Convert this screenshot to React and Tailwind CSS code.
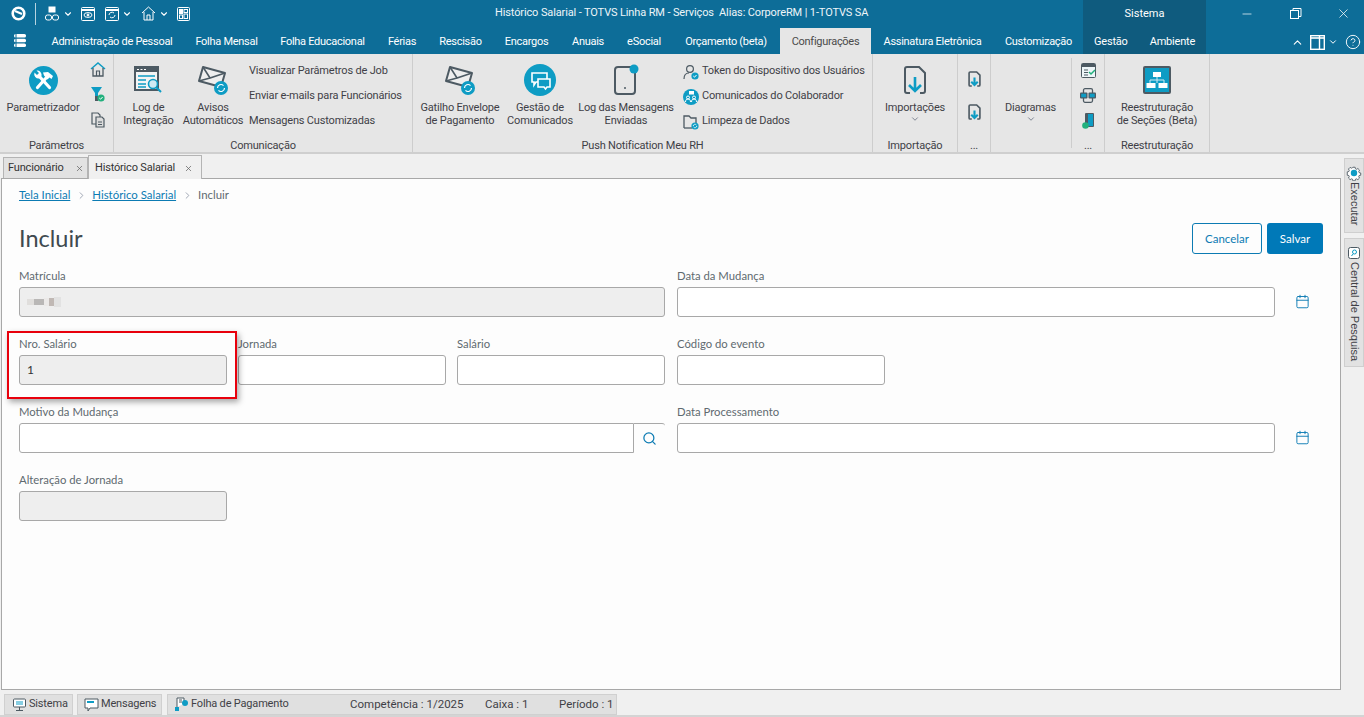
import React from 'react';
import { Calendar, ChevronDown, ChevronRight, ChevronUp, CircleHelp, Minus, Search, X } from 'lucide-react';

const ribbonFont = "font-['Roboto',sans-serif]";
const formFont = "font-['Lato',sans-serif]";

const Teal = '#0e9cc4';
const Dark = '#4d5a63';

const Gear = () => (
    <svg width="16" height="16" viewBox="0 0 16 16">
        <path d="M6.6.8h2.8l.4 2 1.3.6 1.8-1 2 2-1 1.8.5 1.3 2 .5v2.8l-2 .4-.5 1.3 1 1.8-2 2-1.8-1-1.3.5-.4 2H6.6l-.4-2-1.3-.5-1.8 1-2-2 1-1.8-.5-1.3-2-.4V6.600l2-.5.5-1.300-1-1.800 2-2 1.800 1 1.300-.6z" fill="#fff" stroke={Dark} strokeWidth="1.1" transform="translate(1.6 1.6) scale(.8)" />
        <circle cx="8" cy="8" r="3.2" fill={Teal} />
    </svg>
);

const Envelope = ({ size = 34 }) => (
    <svg width={size} height={size} viewBox="0 0 34 34" fill="none">
        <path d="M7 4l22 6-4 14-22-6z" fill="#eee" stroke={Dark} strokeWidth="2" strokeLinejoin="round" />
        <path d="M7 4l7 11 15-5M3 18l11-3" stroke={Dark} strokeWidth="1.6" />
        <circle cx="25" cy="25" r="7" fill={Teal} />
        <path d="M21.5 25a3.5 3.5 0 0 1 6-2.4M28.5 25a3.5 3.5 0 0 1-6 2.4" stroke="#fff" strokeWidth="1.2" />
    </svg>
);

const LogIcon = () => (
    <svg width="30" height="28" viewBox="0 0 30 28" fill="none">
        <rect x="1" y="1" width="23" height="23" fill="#f4f4f4" stroke={Dark} strokeWidth="2" />
        <rect x="1" y="1" width="23" height="5" fill={Dark} />
        <path d="M3 3.500h2M6.500 3.500h2M10 3.500h2" stroke="#fff" />
        <path d="M4 10h17M4 14h8M4 18h8M4 21h8" stroke={Teal} strokeWidth="1.6" />
        <circle cx="19" cy="18" r="4.5" fill="#cfeaf3" stroke={Teal} strokeWidth="1.6" />
        <path d="M22 21l5 5" stroke={Teal} strokeWidth="2" />
    </svg>
);

const SmallHome = () => (
    <svg width="16" height="15" viewBox="0 0 16 15" fill="none">
        <path d="M1 7l7-6 7 6" stroke={Teal} strokeWidth="1.5" />
        <path d="M3 6v8h10V6" stroke={Dark} strokeWidth="1.3" />
        <path d="M6.5 14V9h3v5" stroke={Dark} strokeWidth="1.2" />
    </svg>
);

const FilterCheck = () => (
    <svg width="14" height="15" viewBox="0 0 14 15">
        <path d="M0 0h11L7 6v8H4V6z" fill={Teal} />
        <path d="M4 9h3v5H4z" fill={Dark} />
        <circle cx="10" cy="11" r="3.6" fill="#22b07d" />
        <path d="M8.3 11l1.3 1.2 2-2.2" stroke="#fff" strokeWidth="1" fill="none" />
    </svg>
);

const Copies = () => (
    <svg width="14" height="16" viewBox="0 0 14 16" fill="none" stroke={Dark} strokeWidth="1.2">
        <path d="M1 1h6l2 2v9H1z" fill="#e6e6e6" />
        <path d="M5 5h6l2 2v8H5z" fill="#dcdcdc" />
        <path d="M7 10h4M7 12.5h4" />
    </svg>
);

// crossed hammer and wrench on the teal disc
const Wrench = () => (
    <svg width="29" height="29" viewBox="0 0 29 29" fill="none">
        <circle cx="14.500" cy="14.500" r="14.500" fill={Teal} />
        <path d="M8.500 21.500l8.500-9.500" stroke="#fff" strokeWidth="3.200" strokeLinecap="round" />
        <path d="M14 6.500l5-.5 5 4-1.500 3-2-1.500-2 2-3.500-4z" fill="#fff" />
        <path d="M10 10l10.500 11.500" stroke="#fff" strokeWidth="3.200" strokeLinecap="round" />
        <path d="M5.500 6.500l2.500 2.500 2-2-2.500-2.500a4.500 4.500 0 0 1 5 5.500l-2 2.500a4.500 4.500 0 0 1-5-6z" fill="#fff" />
    </svg>
);

const ChatCircle = () => (
    <svg width="32" height="32" viewBox="0 0 32 32" fill="none">
        <circle cx="16" cy="16" r="16" fill={Teal} />
        <path d="M8 9h15v9H12l-2 3v-3H8z" stroke="#fff" strokeWidth="1.6" />
        <path d="M14 15h12v8h-3l-1.5 2-1.5-2h-6z" fill={Teal} stroke="#fff" strokeWidth="1.6" />
    </svg>
);

const Phone = () => (
    <svg width="26" height="32" viewBox="0 0 26 32" fill="none">
        <rect x="2" y="3" width="20" height="27" rx="3" stroke={Dark} strokeWidth="2" />
        <circle cx="12" cy="24" r="1" fill={Dark} />
        <circle cx="21" cy="5" r="4.5" fill={Teal} />
    </svg>
);

const UserCheck = () => (
    <svg width="16" height="16" viewBox="0 0 16 16" fill="none">
        <circle cx="7" cy="5" r="3.4" stroke={Dark} strokeWidth="1.2" />
        <path d="M1 15c0-4 2-6 5-6" stroke={Dark} strokeWidth="1.2" />
        <circle cx="12" cy="12" r="3.6" fill={Teal} />
        <path d="M10.3 12l1.2 1.2 2-2.2" stroke="#fff" strokeWidth="1" />
    </svg>
);

const PeopleCircle = () => (
    <svg width="16" height="16" viewBox="0 0 16 16" fill="none">
        <circle cx="8" cy="8" r="8" fill={Teal} />
        <rect x="6" y="2" width="5" height="3.5" fill="#fff" />
        <circle cx="5" cy="8.5" r="1.5" stroke="#fff" />
        <circle cx="11" cy="8.5" r="1.5" stroke="#fff" />
        <path d="M2.5 13c0-2 1-3 2.500-3s2.500 1 2.500 3M8.500 13c0-2 1-3 2.500-3s2.500 1 2.500 3" stroke="#fff" />
    </svg>
);

const FolderSync = () => (
    <svg width="16" height="16" viewBox="0 0 16 16" fill="none">
        <path d="M1 14V2h5l2 2h5v6" stroke={Dark} strokeWidth="1.3" />
        <path d="M1 14h8" stroke={Dark} strokeWidth="1.3" />
        <circle cx="12" cy="12" r="3.6" fill={Teal} />
        <path d="M10.2 12a1.8 1.8 0 0 1 3.2-1M13.800 12a1.800 1.800 0 0 1-3.200 1" stroke="#fff" strokeWidth=".8" />
    </svg>
);

const FileDown = ({ w = 24, h = 28, sw = 2 }) => (
    <svg width={w} height={h} viewBox="0 0 24 28" fill="none">
        <path d="M7 27H4a2 2 0 0 1-2-2V3a2 2 0 0 1 2-2h12l6 6v18a2 2 0 0 1-2 2h-3" stroke={Dark} strokeWidth={sw} />
        <path d="M12 11v14M6 19l6 6 6-6" stroke={Teal} strokeWidth={sw * 1.3} />
    </svg>
);

const FormCheck = () => (
    <svg width="15" height="15" viewBox="0 0 15 15" fill="none">
        <rect x=".5" y=".5" width="14" height="14" rx="1" fill="#eef6f9" stroke={Dark} />
        <rect x="1" y="1" width="13" height="3" fill={Dark} />
        <path d="M3 7h4M3 9.500h4M3 12h4" stroke={Dark} />
        <path d="M8 9l2 2 4-4" stroke="#22b07d" strokeWidth="1.5" />
    </svg>
);

const LinkedBoxes = () => (
    <svg width="16" height="15" viewBox="0 0 16 15" fill="none">
        <rect x="3.500" y=".7" width="9" height="13.600" rx="1.500" stroke={Dark} strokeWidth="1.300" />
        <rect x="0" y="4.500" width="7.500" height="6" rx="1" fill={Dark} />
        <rect x="8.500" y="4.500" width="7.500" height="6" rx="1" fill={Dark} />
        <rect x="1.200" y="5.700" width="5" height="3.600" fill={Teal} />
        <rect x="9.700" y="5.700" width="5" height="3.600" fill={Teal} />
    </svg>
);

const DoorCheck = () => (
    <svg width="13" height="16" viewBox="0 0 13 16">
        <rect x="3" y="0" width="9" height="14" rx="1" fill={Dark} />
        <rect x="6" y="1" width="5" height="12" fill={Teal} />
        <circle cx="3.5" cy="12.5" r="3.3" fill="#22b07d" />
    </svg>
);

const Hierarchy = () => (
    <svg width="28" height="28" viewBox="0 0 28 28" fill="none">
        <rect x="0" y="0" width="28" height="28" rx="2" fill={Dark} />
        <rect x="2" y="2" width="24" height="24" fill={Teal} />
        <rect x="10" y="6" width="8" height="5" fill="#fff" />
        <path d="M14 11v3M7 17v-3h14v3M14 14v3" stroke="#cfeaf3" />
        <rect x="3.5" y="17" width="9" height="5" fill="#fff" />
        <rect x="15.5" y="17" width="9" height="5" fill="#fff" />
    </svg>
);

const LargeButton = ({ icon, lines, width, chevron }) => (
    <div className="flex flex-col items-center" style={{ width }}>
        <div className="h-[38px] w-full flex items-center justify-center">{icon}</div>
        <div className="mt-[2px] text-center leading-[13px] whitespace-nowrap">
            {lines.map((l) => <div key={l}>{l}</div>)}
        </div>
        {chevron && <ChevronDown className="w-[10px] h-[10px] text-gray-500" />}
    </div>
);

const SmallRow = ({ icon, children }) => (
    <div className="h-[25px] flex items-center gap-[3px] whitespace-nowrap">
        {icon}
        <span>{children}</span>
    </div>
);

const RibbonGroup = ({ width, label, children, className = 'border-r' }) => (
    <div className={`h-full flex flex-col border-[#cdcdcd] shrink-0 ${className}`} style={{ width }}>
        <div className="h-[85px] flex">{children}</div>
        <div className="flex-1 text-center leading-[13px]">{label}</div>
    </div>
);

const Field = ({ label, width, readOnly, value, children, className = '' }) => (
    <div className={`shrink-0 ${className}`} style={{ width }}>
        <div className="h-[19px] text-[11.3px] leading-[15px] text-[#5f6a70]">{label}</div>
        <div className="flex">
            <div className={`flex-1 h-[30px] border border-[#a8a8a8] rounded-[3px] flex items-center pl-[7px] text-[12px] text-[#333] ${readOnly ? 'bg-[#eeeeee]' : 'bg-white'} ${children ? 'rounded-r-none' : ''}`}>
                {value}
            </div>
            {children}
        </div>
    </div>
);

const BlurredValue = () => (
    <div className="flex items-center">
        <div className="w-[7px] h-[6px] bg-[#e0dedc]" />
        <div className="w-[10px] h-[6px] bg-[#b9b7b6]" />
        <div className="w-[5px] h-[8px] bg-[#ebe9e8]" />
        <div className="w-[5px] h-[8px] bg-[#c0b8b4]" />
        <div className="w-[7px] h-[10px] bg-[#e2e2e2]" />
    </div>
);

const menuTabs = [
    ['Administração de Pessoal', 144],
    ['Folha Mensal', 85],
    ['Folha Educacional', 107],
    ['Férias', 52],
    ['Rescisão', 65],
    ['Encargos', 67],
    ['Anuais', 56],
    ['eSocial', 56],
    ['Orçamento (beta)', 108],
];

export default function App() {
    return (
        <div className={`w-[1364px] h-[717px] overflow-hidden flex flex-col bg-[#f0f0f0] text-[11px] text-[#333] ${ribbonFont}`}>
            {/* title bar and menu */}
            <header className="h-[54px] flex bg-[#0d6d98] text-white shrink-0">
                <div className="w-[1083px] flex flex-col">
                    <div className="h-[27px] flex items-center">
                        <div className="flex items-center ml-[11px] w-[484px] gap-[6px]">
                            <svg width="15" height="15" viewBox="0 0 15 15" fill="none">
                                <circle cx="7.5" cy="7.5" r="5.8" stroke="#fff" strokeWidth="2.6" />
                                <path d="M4 5l7 3" stroke="#fff" strokeWidth="2" />
                            </svg>
                            <div className="w-px h-[22px] bg-white/70 mx-[3px]" />
                            <svg width="15" height="15" viewBox="0 0 15 15" fill="none" stroke="#fff">
                                <rect x="4" y="1" width="6" height="5" fill="#fff" />
                                <rect x=".5" y="9" width="6" height="5" rx="2" />
                                <rect x="7.5" y="9" width="6" height="5" rx="2" />
                            </svg>
                            <ChevronDown className="w-[10px] h-[10px] -ml-[3px]" strokeWidth={2.6} />
                            <svg width="14" height="14" viewBox="0 0 14 14" fill="none" stroke="#fff" className="ml-[2px]">
                                <rect x=".5" y=".5" width="13" height="13" rx="1" />
                                <path d="M1 3h12" strokeWidth="2" />
                                <ellipse cx="7" cy="8" rx="4" ry="2.4" />
                                <circle cx="7" cy="8" r="1" fill="#fff" />
                            </svg>
                            <svg width="14" height="14" viewBox="0 0 14 14" fill="none" stroke="#fff" className="ml-[4px]">
                                <rect x=".5" y=".5" width="13" height="13" rx="1" />
                                <path d="M1 3h12" strokeWidth="2" />
                                <path d="M4 8a3 3 0 0 1 5-2M10 8a3 3 0 0 1-5 2" />
                            </svg>
                            <ChevronDown className="w-[10px] h-[10px] -ml-[3px]" strokeWidth={2.6} />
                            <svg width="15" height="15" viewBox="0 0 15 15" fill="none" stroke="#fff" className="ml-[3px]">
                                <path d="M1 7l6.5-6L14 7" />
                                <path d="M3 6v8h9V6M6 14V9h3v5" />
                            </svg>
                            <ChevronDown className="w-[10px] h-[10px] -ml-[3px]" strokeWidth={2.6} />
                            <svg width="13" height="14" viewBox="0 0 13 14" fill="none" stroke="#fff" className="ml-[2px]">
                                <rect x=".5" y=".5" width="12" height="13" rx="1" />
                                <rect x="2.5" y="2.5" width="3" height="4" fill="#fff" />
                                <rect x="7" y="2.5" width="3.5" height="3" />
                                <rect x="2.5" y="8" width="3" height="3.5" />
                                <rect x="7" y="7" width="3.5" height="4.5" />
                            </svg>
                        </div>
                        <div className="whitespace-nowrap text-[#eef5f8] tracking-[-0.125px]">Histórico Salarial - TOTVS Linha RM - Serviços&nbsp; Alias: CorporeRM | 1-TOTVS SA</div>
                    </div>
                    <div className="h-[27px] flex items-center tracking-[-0.28px]">
                        <svg width="14" height="15" viewBox="0 0 14 15" fill="#fff" className="ml-[13px] mr-[13px] shrink-0">
                            <rect x="1" y="1" width="12" height="3.6" rx="1.6" />
                            <rect x="1" y="5.7" width="12" height="3.6" rx="1.6" />
                            <rect x="1" y="10.4" width="12" height="3.6" rx="1.6" />
                            <path d="M3 1v13" stroke="#0d6d98" strokeWidth="1" />
                        </svg>
                        {menuTabs.map(([t, w]) => (
                            <span key={t} className="whitespace-nowrap text-center pt-[3px] shrink-0" style={{ width: w }}>{t}</span>
                        ))}
                        <span className="h-full w-[91px] bg-[#e6e6e6] text-[#4a4a4a] flex items-center justify-center shrink-0 pt-[3px] mt-px">Configurações</span>
                        <span className="whitespace-nowrap text-center pt-[3px] w-[123px] shrink-0">Assinatura Eletrônica</span>
                        <span className="whitespace-nowrap text-center pt-[3px] w-[89px] shrink-0">Customização</span>
                    </div>
                </div>
                <div className="w-[123px] bg-[#0f5b7e] flex flex-col">
                    <div className="h-[27px] flex items-center justify-center pt-[2px]">Sistema</div>
                    <div className="h-[27px] flex items-center pl-[11px] gap-[22px] pt-[3px] tracking-[-0.2px]">
                        <span>Gestão</span>
                        <span>Ambiente</span>
                    </div>
                </div>
                <div className="flex-1 flex flex-col">
                    <div className="h-[27px] flex items-center pl-[34px]">
                        <Minus className="w-[14px] h-[14px]" strokeWidth={1.2} />
                        <svg width="12" height="12" viewBox="0 0 12 12" fill="none" stroke="#fff" className="ml-[36px]">
                            <rect x=".5" y="2.5" width="8" height="8" />
                            <path d="M3 2.5V.5h8v8H9" />
                        </svg>
                        <X className="w-[15px] h-[15px] ml-[34px]" strokeWidth={1.2} />
                    </div>
                    <div className="h-[27px] flex items-center pl-[85px] pt-[3px]">
                        <ChevronUp className="w-[13px] h-[13px] mr-[6px]" strokeWidth={2} />
                        <svg width="15" height="15" viewBox="0 0 15 15" fill="none" stroke="#fff" strokeWidth="1.4">
                            <rect x=".7" y=".7" width="13.6" height="13.6" />
                            <path d="M1 3h13" strokeWidth="1.6" />
                            <path d="M9.5 1v13" />
                        </svg>
                        <ChevronDown className="w-[10px] h-[10px] ml-[3px] mr-[7px]" strokeWidth={2.4} />
                        <CircleHelp className="w-[16px] h-[16px]" strokeWidth={1.4} />
                    </div>
                </div>
            </header>

            {/* ribbon */}
            <div className="h-[100px] bg-[#e6e6e6] border-b-2 border-[#cfcfcf] flex shrink-0 text-[#3f3f46] tracking-[-0.18px]">
                <RibbonGroup width={114} label="Parâmetros">
                    <div className="pt-[7px] pl-[1px] flex">
                        <LargeButton icon={<Wrench />} lines={['Parametrizador']} width={84} />
                        <div className="ml-[3px] pt-[1px] flex flex-col gap-[10px] items-center w-[20px]">
                            <SmallHome />
                            <FilterCheck />
                            <Copies />
                        </div>
                    </div>
                </RibbonGroup>
                <RibbonGroup width={299} label="Comunicação">
                    <div className="pt-[7px] flex">
                        <LargeButton icon={<LogIcon />} lines={['Log de', 'Integração']} width={69} />
                        <LargeButton icon={<Envelope />} lines={['Avisos', 'Automáticos']} width={60} />
                        <div className="ml-[6px] -mt-[2px]">
                            <SmallRow>Visualizar Parâmetros de Job</SmallRow>
                            <SmallRow>Enviar e-mails para Funcionários</SmallRow>
                            <SmallRow>Mensagens Customizadas</SmallRow>
                        </div>
                    </div>
                </RibbonGroup>
                <RibbonGroup width={460} label="Push Notification Meu RH">
                    <div className="pt-[7px] flex">
                        <LargeButton icon={<Envelope />} lines={['Gatilho Envelope', 'de Pagamento']} width={94} />
                        <LargeButton icon={<ChatCircle />} lines={['Gestão de', 'Comunicados']} width={66} />
                        <LargeButton icon={<Phone />} lines={['Log das Mensagens', 'Enviadas']} width={106} />
                        <div className="ml-[4px] -mt-[2px]">
                            <SmallRow icon={<UserCheck />}>Token do Dispositivo dos Usuários</SmallRow>
                            <SmallRow icon={<PeopleCircle />}>Comunicados do Colaborador</SmallRow>
                            <SmallRow icon={<FolderSync />}>Limpeza de Dados</SmallRow>
                        </div>
                    </div>
                </RibbonGroup>
                <RibbonGroup width={85} label="Importação">
                    <div className="pt-[7px]">
                        <LargeButton icon={<FileDown />} lines={['Importações']} width={84} chevron />
                    </div>
                </RibbonGroup>
                <RibbonGroup width={33} label="...">
                    <div className="w-full pt-[17px] flex flex-col items-center gap-[17px]">
                        <FileDown w={13} h={16} sw={3} />
                        <FileDown w={13} h={16} sw={3} />
                    </div>
                </RibbonGroup>
                <RibbonGroup width={80} label="" className="border-r-0">
                    <div className="pt-[7px]">
                        <LargeButton icon={null} lines={['Diagramas']} width={79} chevron />
                    </div>
                </RibbonGroup>
                <div className="w-px h-[90px] mt-[4px] bg-[#cdcdcd] shrink-0" />
                <RibbonGroup width={33} label="...">
                    <div className="w-full pt-[9px] flex flex-col items-center gap-[10px]">
                        <FormCheck />
                        <LinkedBoxes />
                        <DoorCheck />
                    </div>
                </RibbonGroup>
                <RibbonGroup width={105} label="Reestruturação">
                    <div className="pt-[7px]">
                        <LargeButton icon={<Hierarchy />} lines={['Reestruturação', 'de Seções (Beta)']} width={104} />
                    </div>
                </RibbonGroup>
            </div>

            {/* body */}
            <div className="flex-1 flex min-h-0">
                <div className="w-[1340px] ml-[1px] flex flex-col shrink-0">
                    <div className="h-[24px] flex items-end pl-[2px] shrink-0 tracking-[-0.18px]">
                        <div className="h-[21px] w-[85px] bg-[#e2e2e2] border border-b-0 border-[#b4b4b4] flex items-center justify-between pl-[4px] pr-[3px] pt-px whitespace-nowrap">
                            Funcionário <X className="w-[9px] h-[9px] text-[#666]" />
                        </div>
                        <div className="h-[24px] w-[114px] bg-[#f0f0f0] border border-b-0 border-[#b4b4b4] flex items-center justify-between pl-[6px] pr-[8px] pt-px whitespace-nowrap -mb-px relative z-10">
                            Histórico Salarial <X className="w-[9px] h-[9px] text-[#666]" />
                        </div>
                    </div>
                    <main className={`flex-1 bg-[#fdfdfd] border border-[#a8a8a8] px-[17px] ${formFont}`}>
                        <nav className="h-[31px] flex items-center text-[11.4px] pt-[1px]">
                            <span className="text-[#0c7bb3] underline">Tela Inicial</span>
                            <ChevronRight className="w-[11px] h-[11px] text-gray-400 mx-[5.5px]" />
                            <span className="text-[#0c7bb3] underline">Histórico Salarial</span>
                            <ChevronRight className="w-[11px] h-[11px] text-gray-400 mx-[5.5px]" />
                            <span className="text-[#5f6a70]">Incluir</span>
                        </nav>
                        <div className="h-[58px] flex items-center justify-between">
                            <h1 className="text-[23.5px] font-normal text-[#3f4a50]">Incluir</h1>
                            <div className="flex gap-[5px] text-[11.5px] -mt-px">
                                <div className="w-[70px] h-[31px] border border-[#0c7bb3] rounded-[3px] text-[#0c7bb3] flex items-center justify-center">Cancelar</div>
                                <div className="w-[56px] h-[31px] bg-[#0079b8] rounded-[3px] text-white flex items-center justify-center">Salvar</div>
                            </div>
                        </div>
                        <div className="flex flex-col gap-[19px]">
                            <div className="flex gap-[12px]">
                                <Field label="Matrícula" width={646} readOnly value={<BlurredValue />} />
                                <Field label="Data da Mudança" width={598} />
                                <Calendar className="w-[15px] h-[15px] text-[#0c7bb3] ml-[8px] mt-[26px]" strokeWidth={1.5} />
                            </div>
                            <div className="flex gap-[11px]">
                                <div className="relative">
                                    <Field label="Nro. Salário" width={208} readOnly value="1" />
                                    <div className="absolute -left-[12px] -top-[5px] w-[230px] h-[68px] border-[2px] border-[#e8000c] shadow-[2px_3px_6px_rgba(0,0,0,0.35)]" />
                                </div>
                                <Field label="Jornada" width={208} />
                                <Field label="Salário" width={208} />
                                <Field label="Código do evento" width={208} className="ml-px" />
                            </div>
                            <div className="flex gap-[12px]">
                                <Field label="Motivo da Mudança" width={646}>
                                    <div className="w-[31px] h-[30px] border-t border-[#a8a8a8] rounded-tr-[3px] flex items-center justify-center">
                                        <Search className="w-[15px] h-[15px] text-[#0c7bb3]" />
                                    </div>
                                </Field>
                                <Field label="Data Processamento" width={598} />
                                <Calendar className="w-[15px] h-[15px] text-[#0c7bb3] ml-[8px] mt-[26px]" strokeWidth={1.5} />
                            </div>
                            <Field label="Alteração de Jornada" width={208} readOnly />
                        </div>
                    </main>
                </div>
                <aside className="flex-1 pl-[3px] pt-[4px] flex flex-col gap-[5px] text-[#3f3f46] font-['Liberation_Sans',sans-serif]">
                    <div className="h-[75px] bg-[#e2e2e2] border border-[#cfcfcf] flex flex-col items-center pt-[6px] gap-[1px]">
                        <Gear />
                        <span className="[writing-mode:vertical-rl] leading-none">Executar</span>
                    </div>
                    <div className="h-[129px] bg-[#e2e2e2] border border-[#cfcfcf] flex flex-col items-center pt-[8px] gap-[3px]">
                        <svg width="12" height="12" viewBox="0 0 12 12" fill="none" stroke={Dark}>
                            <rect x=".5" y=".5" width="11" height="11" rx="2" fill="#fff" />
                            <circle cx="6.5" cy="5" r="2" stroke={Teal} />
                            <path d="M5 7L3.5 9" stroke={Teal} />
                        </svg>
                        <span className="[writing-mode:vertical-rl] leading-none whitespace-nowrap">Central de Pesquisa</span>
                    </div>
                </aside>
            </div>

            {/* status bar */}
            <footer className="h-[27px] flex pl-[4px] pt-[4px] shrink-0 border-b-2 border-[#d4d4d4] text-[#3f3f46] tracking-[-0.18px]">
                <div className="w-[69px] bg-[#e0e0e0] border border-[#d0d0d0] flex items-center pl-[7px] gap-[2px]">
                    <svg width="15" height="14" viewBox="0 0 15 14" fill="none" stroke={Dark}>
                        <rect x="1.5" y="1" width="12" height="8" rx="1" fill="#fff" />
                        <path d="M4 4h7M4 6h7" stroke={Teal} />
                        <path d="M7.5 9v3M4 12.5h7" />
                    </svg>
                    Sistema
                </div>
                <div className="w-[85px] ml-[4px] bg-[#e0e0e0] border border-[#d0d0d0] flex items-center pl-[6px] gap-[2px]">
                    <svg width="15" height="14" viewBox="0 0 15 14" fill="none" stroke={Dark}>
                        <path d="M1 1h13v9H6l-2 3v-3H1z" fill="#fff" />
                        <path d="M3 3h7v2H3z" fill={Teal} stroke="none" />
                    </svg>
                    Mensagens
                </div>
                <div className="w-[450px] ml-[5px] bg-[#e0e0e0] border border-[#d0d0d0] flex items-center pl-[6px] whitespace-nowrap">
                    <svg width="15" height="15" viewBox="0 0 15 15" fill="none" stroke={Dark} className="mr-[2px] shrink-0">
                        <path d="M3 10V1h7v6" fill="#fff" />
                        <path d="M5 3h3M5 5h3" />
                        <circle cx="11" cy="6" r="3" fill={Teal} stroke="none" />
                        <rect x="1" y="10" width="4" height="4" fill={Teal} stroke="none" />
                    </svg>
                    <span className="w-[159px] shrink-0">Folha de Pagamento</span>
                    <span className="w-[135px] shrink-0 text-[11.5px] tracking-normal">Competência : 1/2025</span>
                    <span className="w-[74px] shrink-0 text-[11.5px] tracking-normal">Caixa : 1</span>
                    <span className="shrink-0 text-[11.5px] tracking-normal">Período : 1</span>
                </div>
            </footer>
        </div>
    );
}
